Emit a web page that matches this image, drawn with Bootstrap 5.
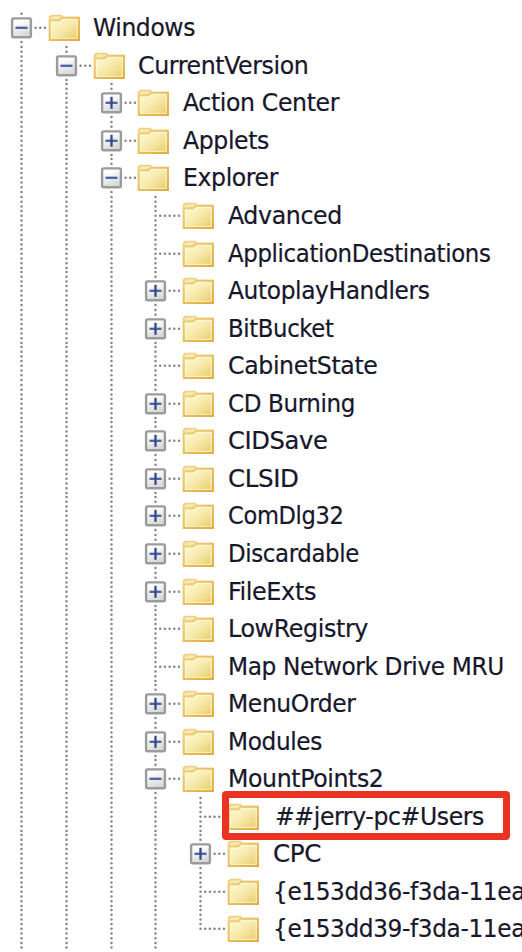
<!DOCTYPE html>
<html lang="en">
<head>
<meta charset="utf-8">
<meta name="viewport" content="width=device-width, initial-scale=1">
<title>Registry tree</title>
<link rel="stylesheet" href="https://cdn.jsdelivr.net/npm/bootstrap@5.3.0/dist/css/bootstrap.min.css">
<style>
  :root { --row: 37.55px; --step: 44.77px; }
  body { font-family: "DejaVu Sans Condensed", "DejaVu Sans", sans-serif; font-stretch: condensed; color: #17172b; height: 952px; }
  .tree { padding-top: 9.3px; height: 952px; }
  .tree-row { height: var(--row); }
  .guide { width: var(--step); height: var(--row); overflow: visible; }
  .guide .dots { stroke: #858585; stroke-width: 2.5; stroke-linecap: round; stroke-dasharray: 0 4.694; fill: none; }
  .folder { width: 38px; height: var(--row); overflow: visible; }
  .label-text { font-size: 24.6px; line-height: 37.4px; height: var(--row); margin-left: 10.7px; letter-spacing: -.35px; transform-origin: 0 50%; -webkit-text-stroke: .2px #17172b; }
  .marked .label-text { margin-left: 12.7px; }
  .frame { position: absolute; left: -2.2px; top: -6.5px; width: 288.5px; height: 49px; border: 7.7px solid #ea3323; border-radius: 4px; }
  .marked { z-index: 1; }
</style>
</head>
<body class="bg-white m-0 overflow-hidden">
<svg width="0" height="0" class="position-absolute" aria-hidden="true">
  <defs>
    <linearGradient id="boxFill" x1="0" y1="0" x2="0.4" y2="1"><stop offset="0.3" stop-color="#fdfdfd"/><stop offset="1" stop-color="#d9d9d9"/></linearGradient>
    <linearGradient id="folderFill" x1="0" y1="0" x2="1" y2="1"><stop offset="0" stop-color="#fffbd9"/><stop offset="0.5" stop-color="#f7eaac"/><stop offset="1" stop-color="#e5c964"/></linearGradient>
    <linearGradient id="folderEdge" x1="0" y1="0" x2="1" y2="1"><stop offset="0" stop-color="#efd27f"/><stop offset="1" stop-color="#e0ac43"/></linearGradient>
    <g id="folderIcon">
      <path d="M4.6 18V7.8h1.5V6.6h10.1l1.7 1.8h16v10z" fill="#f8e9b3" stroke="#edcf83" stroke-width="1.5"/>
      <path d="M4.7 11.4H14l3-2.6h16.9v22.2H4.7z" fill="url(#folderFill)" stroke="url(#folderEdge)" stroke-width="2.1"/>
      <path d="M6.5 29.3V13.2h8.3l3-2.6h14.4v18.7" fill="none" stroke="#fff9dc" stroke-width="1" opacity=".85"/>
      <path d="M6 29.4h26.5" stroke="#fff1ba" stroke-width="1"/>
    </g>
    <g id="boxIcon">
      <rect x="12.1" y="9.4" width="18.8" height="18.8" rx="1.5" fill="url(#boxFill)" stroke="#9b9b9b" stroke-width="2.4"/>
      <path d="M15.5 18.8h12" stroke="#4b60a8" stroke-width="2.3"/>
    </g>
  </defs>
</svg>
<main class="tree position-relative" id="tree" role="tree"></main>
<script src="https://cdn.jsdelivr.net/npm/bootstrap@5.3.0/dist/js/bootstrap.bundle.min.js"></script>
<script>
  // level, toggle (+, - or none), name, drawn width of the name
  const nodes = [
    [0, '-', 'Windows', 102], [1, '-', 'CurrentVersion', 170.5], [2, '+', 'Action Center', 156],
    [2, '+', 'Applets', 86], [2, '-', 'Explorer', 95], [3, '', 'Advanced', 114],
    [3, '', 'ApplicationDestinations', 262.5], [3, '+', 'AutoplayHandlers', 201.5], [3, '+', 'BitBucket', 105.5],
    [3, '', 'CabinetState', 149.5], [3, '+', 'CD Burning', 127], [3, '+', 'CIDSave', 99.5],
    [3, '+', 'CLSID', 70.5], [3, '+', 'ComDlg32', 115.5], [3, '+', 'Discardable', 131],
    [3, '+', 'FileExts', 88], [3, '', 'LowRegistry', 140], [3, '', 'Map Network Drive MRU', 276],
    [3, '+', 'MenuOrder', 127.5], [3, '+', 'Modules', 94], [3, '-', 'MountPoints2', 155.5],
    [4, '', '##jerry-pc#Users', 209, true], [4, '+', 'CPC', 48],
    [4, '', '{e153dd36-f3da-11ea', 252], [4, '', '{e153dd39-f3da-11ea', 252]
  ];
  const P = 4.694, X = 21.5, Y = 18.8;
  const vert = (a, b) => `<path class="dots" d="M${X} ${Y + a * P}V${Y + b * P + 0.05}"/>`;
  const horiz = (a, b) => `<path class="dots" d="M${X + a * P} ${Y}H${X + b * P + 0.05}"/>`;
  const tree = document.getElementById('tree');
  nodes.forEach(([level, toggle, name, width, marked], i) => {
    const last = i === nodes.length - 1;
    const row = document.createElement('div');
    row.className = 'tree-row d-flex flex-nowrap text-nowrap';
    row.setAttribute('role', 'treeitem');
    let html = '';
    for (let c = 0; c <= level; c++) {
      let art = '';
      if (c < level) art = vert(-4, last ? 4 : 3);
      else if (toggle) {
        art = vert(i ? -4 : -3, -3) + vert(3, 3) + horiz(3, 5) + '<use href="#boxIcon"/>';
        if (toggle === '+') art += '<path d="M21.5 12.8v12" stroke="#354984" stroke-width="2.3"/>';
      } else art = vert(-4, last ? 0 : 3) + horiz(1, 5);
      html += `<svg class="guide flex-shrink-0" aria-hidden="true">${art}</svg>`;
    }
    html += `<div class="d-flex position-relative ${marked ? 'marked' : ''}"><svg class="folder flex-shrink-0" aria-hidden="true"><use href="#folderIcon"/></svg><span class="label-text"></span>${marked ? '<div class="frame"></div>' : ''}</div>`;
    row.innerHTML = html;
    tree.append(row);
    const label = row.querySelector('.label-text');
    label.textContent = name;
    label.style.transform = `scaleX(${width / label.getBoundingClientRect().width})`;
  });
</script>
</body>
</html>
